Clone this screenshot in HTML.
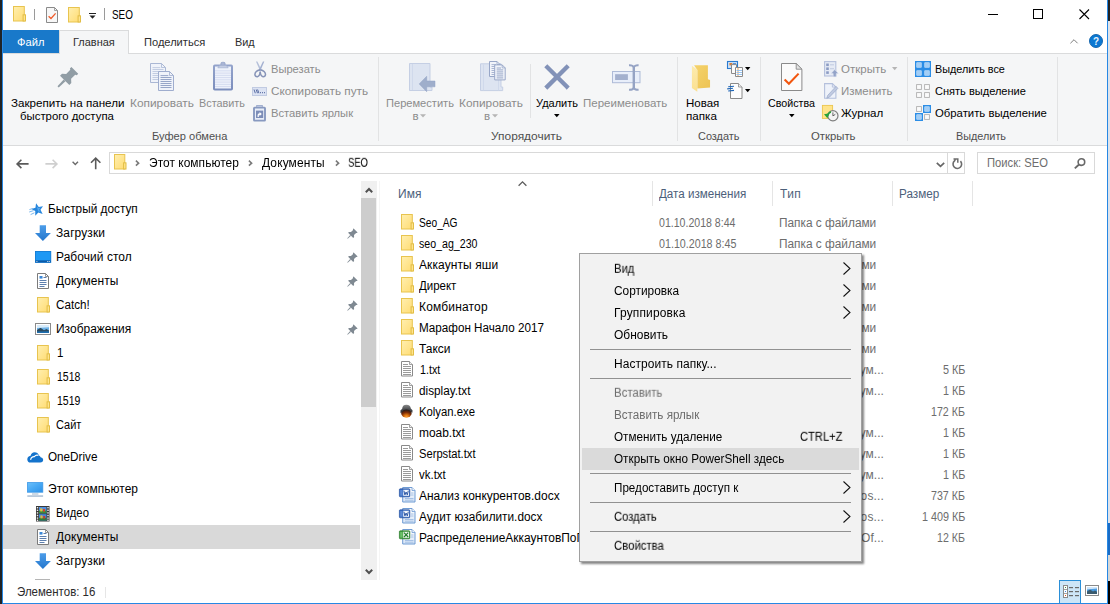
<!DOCTYPE html>
<html lang="ru"><head><meta charset="utf-8"><title>SEO</title>
<style>
html,body{margin:0;padding:0;background:#fff;overflow:hidden}
body{width:1110px;height:604px;position:relative;font-family:"Liberation Sans",sans-serif;font-size:12px;line-height:16px;color:#000}
.a{position:absolute}
.t{position:absolute;white-space:nowrap;font-size:11.5px;line-height:16px;height:16px;transform-origin:0 12px}
.z{z-index:20}
span.z,span.g{will-change:transform}
svg{position:absolute;overflow:visible}
.vs{position:absolute;width:1px;background:#e2e3e4}
</style></head><body>
<!-- outer desktop strips -->
<div class="a" style="left:0;top:0;width:2px;height:604px;background:#1f2326"></div>
<div class="a" style="left:1108px;top:0;width:2px;height:604px;background:#dfe3ea"></div>
<div class="a" style="left:1108px;top:0;width:2px;height:21px;background:#1f2326"></div>
<div class="a" style="left:1108px;top:523px;width:2px;height:32px;background:#1a6cc4"></div>
<div class="a" style="left:1108px;top:555px;width:2px;height:26px;background:#d6d6d6"></div>
<div class="a" style="left:1108px;top:581px;width:2px;height:23px;background:#000"></div>
<!-- window border -->
<div class="a" style="left:2px;top:0;width:1104px;height:603px;border:1px solid #2788e4;border-top:0;background:#fff"></div>
<!-- tabs -->
<div class="a" style="left:3px;top:30px;width:56px;height:23px;background:#1979ca"></div>
<div class="a" style="left:3px;top:53px;width:1104px;height:1px;background:#dadbdc"></div>
<div class="a" style="left:59px;top:30px;width:70px;height:24px;background:#f5f6f7;border:1px solid #dadbdc;border-bottom:0;box-sizing:border-box"></div>
<!-- ribbon -->
<div class="a" style="left:3px;top:54px;width:1104px;height:91px;background:#f5f6f7"></div>
<div class="a" style="left:3px;top:145px;width:1104px;height:1px;background:#dadbdc"></div>
<div class="vs" style="left:378px;top:57px;height:84px"></div>
<div class="vs" style="left:530px;top:64px;height:54px"></div>
<div class="vs" style="left:677px;top:57px;height:84px"></div>
<div class="vs" style="left:760px;top:57px;height:84px"></div>
<div class="vs" style="left:907px;top:57px;height:84px"></div>
<div class="vs" style="left:1057px;top:57px;height:84px"></div>
<!-- address bar -->
<div class="a" style="left:109px;top:152px;width:856px;height:22px;border:1px solid #d9d9d9;box-sizing:border-box"></div>
<div class="a" style="left:947px;top:153px;width:1px;height:20px;background:#d9d9d9"></div>
<div class="a" style="left:977px;top:152px;width:118px;height:22px;border:1px solid #d9d9d9;box-sizing:border-box"></div>
<!-- nav pane -->
<div class="a" style="left:3px;top:525px;width:357px;height:24px;background:#d9d9d9"></div>
<div class="a" style="left:361px;top:181px;width:16px;height:399px;background:#f0f0f0"></div>
<div class="a" style="left:361px;top:198px;width:15px;height:209px;background:#cdcdcd"></div>
<div class="a" style="left:379px;top:181px;width:1px;height:399px;background:#f5f5f5"></div>
<!-- header -->
<div class="a" style="left:652px;top:181px;width:1px;height:25px;background:#e5e5e5"></div>
<div class="a" style="left:772px;top:181px;width:1px;height:25px;background:#e5e5e5"></div>
<div class="a" style="left:892px;top:181px;width:1px;height:25px;background:#e5e5e5"></div>
<div class="a" style="left:972px;top:181px;width:1px;height:25px;background:#e5e5e5"></div>
<!-- status bar -->
<div class="a" style="left:105px;top:587px;width:1px;height:11px;background:#e6e6e6"></div>
<div class="a" style="left:1059px;top:580px;width:22px;height:23px;background:#cde5f7;border:1px solid #2a8fd8;border-bottom:0;box-sizing:border-box"></div>
<!-- context menu -->
<div class="a z" style="left:579px;top:253px;width:283px;height:309px;background:#f2f2f2;border:1px solid #a0a0a0;box-sizing:border-box;box-shadow:2px 2px 2px rgba(0,0,0,.48);z-index:10"></div>
<div class="a z" style="left:582px;top:448px;width:277px;height:22px;background:#dadada;z-index:11"></div>
<div class="a z" style="left:590px;top:349px;width:261px;height:1px;background:#919191;z-index:11"></div>
<div class="a z" style="left:590px;top:378px;width:261px;height:1px;background:#919191;z-index:11"></div>
<div class="a z" style="left:590px;top:473px;width:261px;height:1px;background:#919191;z-index:11"></div>
<div class="a z" style="left:590px;top:502px;width:261px;height:1px;background:#919191;z-index:11"></div>
<div class="a z" style="left:590px;top:531px;width:261px;height:1px;background:#919191;z-index:11"></div>
<svg style="left:13px;top:5.8px" width="13" height="15.5" viewBox="0 0 13 15.5"><defs><linearGradient id="fg" x1="0" y1="0" x2="1" y2="1"><stop offset="0" stop-color="#ffefb0"/><stop offset="1" stop-color="#ffdc73"/></linearGradient></defs><rect x="0.5" y="0.5" width="10.8" height="14.5" fill="url(#fg)" stroke="#e8c44f"/><rect x="10.1" y="8.835" width="2.4" height="6.165" fill="#ffe48c" stroke="#e2bd45"/></svg>
<div class="a" style="left:34px;top:9px;width:1px;height:11px;background:#9a9a9a"></div>
<svg style="left:46px;top:7px" width="12" height="16" viewBox="0 0 12 16"><path d="M0.5 0.5H8.5L11.5 3.5V15.5H0.5Z" fill="#f7f7f7" stroke="#8a8a8a"/><path d="M8.5 0.5V3.5H11.5" fill="none" stroke="#8a8a8a" stroke-width=".8"/><path d="M2.600 9.200L5 11.500L9.600 6.400" fill="none" stroke="#f05a28" stroke-width="1.300"/></svg>
<svg style="left:68px;top:7px" width="13" height="15.5" viewBox="0 0 13 15.5"><defs><linearGradient id="fg" x1="0" y1="0" x2="1" y2="1"><stop offset="0" stop-color="#ffefb0"/><stop offset="1" stop-color="#ffdc73"/></linearGradient></defs><rect x="0.5" y="0.5" width="10.8" height="14.5" fill="url(#fg)" stroke="#e8c44f"/><rect x="10.1" y="8.835" width="2.4" height="6.165" fill="#ffe48c" stroke="#e2bd45"/></svg>
<svg style="left:89px;top:13px" width="7" height="6" viewBox="0 0 7 6"><rect x="0" y="0" width="7" height="1" fill="#222"/><path d="M0.5 2.5H6.5L3.5 5.8Z" fill="#222"/></svg>
<div class="a" style="left:104px;top:8px;width:1px;height:12px;background:#9a9a9a"></div>
<svg style="left:988px;top:14px" width="10" height="1" viewBox="0 0 10 1"><rect width="10" height="1" fill="#000"/></svg>
<svg style="left:1033px;top:9px" width="10" height="10" viewBox="0 0 10 10"><rect x=".5" y=".5" width="9" height="9" fill="none" stroke="#000"/></svg>
<svg style="left:1078.5px;top:9px" width="10.5" height="10.5" viewBox="0 0 10.5 10.5"><path d="M.5 .5L10 10M10 .5L.5 10" stroke="#000" stroke-width="1.1" fill="none"/></svg>
<svg style="left:1070px;top:38.5px" width="8" height="4.6" viewBox="0 0 8 4.6"><path d="M.4 4.300L4 .7L7.600 4.300" fill="none" stroke="#7c7c7c" stroke-width="1"/></svg>
<svg style="left:1089px;top:33.8px" width="14" height="14" viewBox="0 0 14 14"><circle cx="7" cy="7" r="6.500" fill="#0c78d2" stroke="#0a5ea8" stroke-width=".9"/><text x="7" y="10.600" text-anchor="middle" font-family="Liberation Sans, sans-serif" font-weight="bold" font-size="10" fill="#e8f2fc">?</text></svg>
<svg style="left:57px;top:67px" width="21.5" height="21" viewBox="0 0 21.5 21"><g fill="#919da5"><path d="M14.400 0L21.200 6.800L19.800 8.200L18.200 7.700L14.100 11.800L14.300 16L12.300 18L3 8.700L5 6.700L9.200 6.900L13.300 2.800L12.900 1.500Z"/><path d="M6.700 12.500L8.500 14.300L1.700 20.500L.5 19.300Z"/></g></svg>
<svg style="left:150px;top:63px" width="24" height="28" viewBox="0 0 24 28"><path d="M0.5 0.5H11.5L15.5 4.5V19.5H0.5Z" fill="#f0f3fa" stroke="#aab7d4"/><path d="M11.5 0.5V4.5H15.5" fill="none" stroke="#aab7d4" stroke-width=".8"/><rect x="2.5" y="4.1" width="7.8" height="1" fill="#c3cde2"/><rect x="2.5" y="6" width="11" height="1" fill="#c3cde2"/><rect x="2.5" y="8" width="11" height="1" fill="#c3cde2"/><rect x="2.5" y="10" width="11" height="1" fill="#c3cde2"/><rect x="2.5" y="12" width="11" height="1" fill="#c3cde2"/><rect x="2.5" y="14" width="11" height="1" fill="#c3cde2"/><rect x="2.5" y="16" width="11" height="1" fill="#c3cde2"/><path d="M8.5 8.5H19.5L23.5 12.5V27.5H8.5Z" fill="#f0f3fa" stroke="#9fadce"/><path d="M19.5 8.5V12.5H23.5" fill="none" stroke="#9fadce" stroke-width=".8"/><rect x="10.5" y="12.1" width="7.8" height="1" fill="#97a6c8"/><rect x="10.5" y="14" width="11" height="1" fill="#97a6c8"/><rect x="10.5" y="16" width="11" height="1" fill="#97a6c8"/><rect x="10.5" y="18" width="11" height="1" fill="#97a6c8"/><rect x="10.5" y="20" width="11" height="1" fill="#97a6c8"/><rect x="10.5" y="22" width="11" height="1" fill="#97a6c8"/><rect x="10.5" y="24" width="11" height="1" fill="#97a6c8"/></svg>
<svg style="left:213px;top:62px" width="20" height="28.5" viewBox="0 0 20 28.5"><defs><linearGradient id="pb" x1="0" y1="0" x2="0" y2="1"><stop offset="0" stop-color="#93a3cb"/><stop offset="1" stop-color="#7c8ebd"/></linearGradient></defs><rect x="1" y="3.600" width="18" height="24" rx=".8" fill="#eef2fb" stroke="url(#pb)" stroke-width="2"/><rect x="2" y="8.4" width="16" height=".9" fill="#d3daee"/><rect x="2" y="10.65" width="16" height=".9" fill="#d3daee"/><rect x="2" y="12.9" width="16" height=".9" fill="#d3daee"/><rect x="2" y="15.15" width="16" height=".9" fill="#d3daee"/><rect x="2" y="17.4" width="16" height=".9" fill="#d3daee"/><rect x="2" y="19.65" width="16" height=".9" fill="#d3daee"/><rect x="2" y="21.9" width="16" height=".9" fill="#d3daee"/><rect x="2" y="24.15" width="16" height=".9" fill="#d3daee"/><rect x="7.900" y=".3" width="4.200" height="3.400" rx="1.200" fill="#aab6d5" stroke="#8f9fc6" stroke-width=".7"/><path d="M4.800 5.800L6.800 3.300H13.200L15.200 5.800Z" fill="#c4cde3" stroke="#98a7ca" stroke-width=".6"/></svg>
<svg style="left:254px;top:60.5px" width="12.5" height="17" viewBox="0 0 12.5 17"><path d="M2 .6L3.400 .6L7.800 9.600L6.300 10.500Z" fill="#b4bfd9"/><path d="M10.300 .6L8.900 .6L4.600 9.600L6.100 10.500Z" fill="#a3b0d0"/><g fill="none" stroke="#8794b8" stroke-width="1.500" stroke-linejoin="round"><path d="M6 8.800Q1.200 10 .9 13.400Q1 15.800 3.400 15.700Q5.800 15.300 6.200 10.800"/><path d="M6.400 8.800Q11.200 10 11.500 13.400Q11.400 15.800 9 15.700Q6.600 15.300 6.200 10.800"/></g></svg>
<svg style="left:252px;top:87px" width="15" height="9" viewBox="0 0 15 9"><rect x=".5" y=".5" width="14" height="8" fill="#dce3f3" stroke="#c1cbe2"/><path d="M2 2.5L3.3 6.2M4.2 2.5L5.5 6.2M5.6 2.5L6.9 6.2" fill="none" stroke="#4a5f99" stroke-width=".9"/><rect x="8" y="5.2" width="1" height="1" fill="#4a5f99"/><rect x="10" y="5.2" width="1" height="1" fill="#4a5f99"/><rect x="12" y="5.2" width="1" height="1" fill="#4a5f99"/></svg>
<svg style="left:253px;top:104.5px" width="13" height="16.5" viewBox="0 0 13 16.5"><rect x="3.7" y=".5" width="5.6" height="2.6" fill="#c9d2e6" stroke="#93a3c8" stroke-width=".8"/><rect x="1" y="2.6" width="11" height="13" rx=".6" fill="#e9eef8" stroke="#8899c0" stroke-width="1.9"/><rect x="3" y="5.6" width="7.2" height="7.4" fill="#7c8db8"/><path d="M4.6 12V10Q4.6 8.3 6.6 8.3V7L8.8 9L6.6 11V9.8Q5.8 9.8 5.8 10.6V12Z" fill="#fff"/></svg>
<svg style="left:409px;top:63px" width="27" height="29" viewBox="0 0 27 29"><path d="M.5 .5H21V24H23V27.5H.5Z" fill="#dde4f1" stroke="#c5cfe4"/><path d="M3.5 1V27" stroke="#d0d9eb" stroke-width="1"/><path d="M26 18V23.8H17.7V28.7L10.2 20.9L17.7 13.3V18Z" fill="#9faecb" stroke="#93a3c4" stroke-width=".5"/></svg>
<svg style="left:480px;top:60.5px" width="26.5" height="31" viewBox="0 0 26.5 31"><path d="M.5 2.8H21V26H22.7V29.6H.5Z" fill="#dde4f1" stroke="#c5cfe4"/><path d="M3.5 3.3V29.3M18.5 19V29.3" stroke="#d0d9eb" stroke-width="1"/><path d="M9.5 0.5H17L20 3.5V15.5H9.5Z" fill="#f1f4fa" stroke="#98a7c8"/><path d="M17 0.5V3.5H20" fill="none" stroke="#98a7c8" stroke-width=".8"/><rect x="11.5" y="3.1" width="4.3" height="1" fill="#aab6d2"/><rect x="11.5" y="5" width="6.5" height="1" fill="#aab6d2"/><rect x="11.5" y="7" width="6.5" height="1" fill="#aab6d2"/><rect x="11.5" y="9" width="6.5" height="1" fill="#aab6d2"/><rect x="11.5" y="11" width="6.5" height="1" fill="#aab6d2"/><rect x="11.5" y="13" width="6.5" height="1" fill="#aab6d2"/><path d="M14.7 3.9H22.2L25.2 6.9V18.9H14.7Z" fill="#f1f4fa" stroke="#98a7c8"/><path d="M22.2 3.9V6.9H25.2" fill="none" stroke="#98a7c8" stroke-width=".8"/><rect x="16.7" y="6.5" width="4.3" height="1" fill="#99a8c8"/><rect x="16.7" y="8.4" width="6.5" height="1" fill="#99a8c8"/><rect x="16.7" y="10.4" width="6.5" height="1" fill="#99a8c8"/><rect x="16.7" y="12.4" width="6.5" height="1" fill="#99a8c8"/><rect x="16.7" y="14.4" width="6.5" height="1" fill="#99a8c8"/><rect x="16.7" y="16.4" width="6.5" height="1" fill="#99a8c8"/></svg>
<svg style="left:544px;top:64px" width="26" height="26" viewBox="0 0 26 26"><path d="M3.3 3.3L22.7 22.7M22.7 3.3L3.3 22.7" stroke="#8292b8" stroke-width="4.3" fill="none" stroke-linecap="square" transform="translate(0,-.1)"/></svg>
<svg style="left:611px;top:63.5px" width="30" height="27" viewBox="0 0 30 27"><rect x="1.5" y="7.5" width="27.5" height="11.2" fill="#e8eefa" stroke="#aebbd8"/><rect x="4.1" y="10.2" width="12.8" height="5.8" fill="#a3b0ce"/><path d="M18 1.2Q21.8 1 22.8 3.2Q23.800 1 27.600 1.200M18 25.800Q21.800 26 22.800 23.800Q23.800 26 27.600 25.800" fill="none" stroke="#95a3c4" stroke-width="2"/><rect x="21.6" y="2.5" width="2.4" height="22" fill="#95a3c4"/></svg>
<svg style="left:420.3px;top:113.6px" width="6" height="4" viewBox="0 0 6 4"><path d="M0 .3H6L3 3.6Z" fill="#b5b5b5"/></svg>
<svg style="left:491.8px;top:113.6px" width="6" height="4" viewBox="0 0 6 4"><path d="M0 .3H6L3 3.6Z" fill="#b5b5b5"/></svg>
<svg style="left:553.8px;top:114px" width="5.6" height="3.4" viewBox="0 0 5.6 3.4"><path d="M0 0H5.6L2.8 3.2Z" fill="#000"/></svg>
<svg style="left:788.8px;top:114px" width="5.6" height="3.4" viewBox="0 0 5.6 3.4"><path d="M0 0H5.6L2.8 3.2Z" fill="#000"/></svg>
<svg style="left:744.8px;top:66.8px" width="5.4" height="3.4" viewBox="0 0 5.4 3.4"><path d="M0 0H5.4L2.7 3.2Z" fill="#000"/></svg>
<svg style="left:744.8px;top:89px" width="5.4" height="3.4" viewBox="0 0 5.4 3.4"><path d="M0 0H5.4L2.7 3.2Z" fill="#000"/></svg>
<svg style="left:892px;top:67.3px" width="5.4" height="3.4" viewBox="0 0 5.4 3.4"><path d="M0 0H5.4L2.7 3.2Z" fill="#b5b5b5"/></svg>
<svg style="left:691px;top:64px" width="20" height="28" viewBox="0 0 20 28"><defs><linearGradient id="nf" x1="0" y1="0" x2="1" y2="1"><stop offset="0" stop-color="#f5d36c"/><stop offset="1" stop-color="#edc353"/></linearGradient><linearGradient id="nf2" x1="0" y1="0" x2="0" y2="1"><stop offset="0" stop-color="#fdebad"/><stop offset="1" stop-color="#fbe090"/></linearGradient></defs><path d="M3.05 1.2H16.9V15.2L19.05 16V23.6L6.3 24.6V6Z" fill="url(#nf)"/><path d="M.9 1.7L6.3 5.8V27.7L.9 23.9Z" fill="url(#nf2)"/></svg>
<svg style="left:727px;top:61px" width="17" height="16" viewBox="0 0 17 16"><rect x=".5" y=".5" width="10" height="7" fill="#cfe3f8" stroke="#2a7bd0" stroke-width="1.1"/><rect x="2.4" y="2" width="3" height="2.4" fill="#d9803a"/><rect x="6" y="2.2" width="3" height="1" fill="#3b7fd0"/><path d="M4.5 3.6H9.5V12.5H4.5Z" fill="#fbfbfb" stroke="#8a8a8a"/><path d="M8.5 6.500H15.500V15.500H8.500Z" fill="#fff" stroke="#8a8a8a"/><path d="M11 7V15" stroke="#e6a15a" stroke-width="1"/><path d="M9.500 9.500H15M9.500 11.500H15M9.500 13.500H15" stroke="#8fc0f0" stroke-width=".9"/></svg>
<svg style="left:727px;top:83px" width="16" height="16" viewBox="0 0 16 16"><path d="M3.5 .5H11.500L15 4V15.500H3.500Z" fill="#fdfdfd" stroke="#8a8a8a"/><path d="M11.500 .5V4H15" fill="#eee" stroke="#8a8a8a" stroke-width=".8"/><path d="M1.200 3.800L7 3.200M.2 5.900L6 5.300M1.200 8L7 7.400" stroke="#1e66b8" stroke-width="1.1"/></svg>
<svg style="left:781px;top:63px" width="21.5" height="28" viewBox="0 0 21.5 28"><path d="M.5 .5H15.200L20.900 6.200V27.500H.500Z" fill="#fbfbfb" stroke="#8a8a8a"/><path d="M15.200 .5V6.200H20.900Z" fill="#e4e4e4" stroke="#8a8a8a" stroke-width=".9"/><path d="M3.600 16.600L7.900 20.800L17.600 10.600" fill="none" stroke="#f2560f" stroke-width="2.100"/></svg>
<svg style="left:824px;top:61px" width="15" height="16" viewBox="0 0 15 16"><rect x=".6" y=".6" width="11.200" height="14.400" fill="#e6ebf5" stroke="#b4c0dc" stroke-width="1.100"/><rect x="2.200" y="2.500" width="2.600" height="2.600" fill="#8c9cc4"/><rect x="2.200" y="6.400" width="2.600" height="2.600" fill="#8c9cc4"/><rect x="2.200" y="10.300" width="2.600" height="2.600" fill="#8c9cc4"/><rect x="6" y="3.200" width="4" height="1.200" fill="#c5cfe4"/><rect x="6" y="7.100" width="4" height="1.200" fill="#c5cfe4"/><path d="M10.700 8.600L14.400 12.600H12.200V15.800H9.200V12.600H7Z" fill="#93a3c8" stroke="#e6ebf5" stroke-width=".5"/></svg>
<svg style="left:824px;top:83px" width="14.5" height="16.5" viewBox="0 0 14.5 16.5"><path d="M.6 .6H8.400L11.900 4.100V15.300H.600Z" fill="#eef2fa" stroke="#b4c0dc" stroke-width="1.100"/><path d="M8.400 .6V4.100H11.900" fill="none" stroke="#b4c0dc" stroke-width=".9"/><path d="M12 3.400L13.900 5.300L5.400 14.200L2.800 15.200L3.700 12.400Z" fill="#c0cae1" stroke="#9aa9c9" stroke-width=".7"/></svg>
<svg style="left:822px;top:105px" width="17" height="17" viewBox="0 0 17 17"><rect x=".4" y=".4" width="10.200" height="13" fill="#ffe48a" stroke="#ecc64e" stroke-width=".9"/><circle cx="10.900" cy="10.700" r="5.100" fill="#f4f4f4" stroke="#7d7d7d" stroke-width="1.200"/><path d="M10.900 7.400V10.900L13.300 9.400" fill="none" stroke="#555" stroke-width=".9"/><path d="M2 9.200L7.600 8.200L5.400 13.200Z" fill="#2aa23a"/><path d="M5.600 10.600Q6.400 7.600 9 7" fill="none" stroke="#2aa23a" stroke-width="1.500"/></svg>
<svg style="left:915px;top:61px" width="16" height="16" viewBox="0 0 16 16"><rect x="0.75" y="0.75" width="6.500" height="6.500" fill="#fff" stroke="#2b8de6" stroke-width="1.500"/><rect x="2" y="2" width="4" height="4" fill="#a3cef6"/><rect x="8.75" y="0.75" width="6.500" height="6.500" fill="#fff" stroke="#2b8de6" stroke-width="1.500"/><rect x="10" y="2" width="4" height="4" fill="#a3cef6"/><rect x="0.75" y="8.75" width="6.500" height="6.500" fill="#fff" stroke="#2b8de6" stroke-width="1.500"/><rect x="2" y="10" width="4" height="4" fill="#a3cef6"/><rect x="8.75" y="8.75" width="6.500" height="6.500" fill="#fff" stroke="#2b8de6" stroke-width="1.500"/><rect x="10" y="10" width="4" height="4" fill="#a3cef6"/></svg>
<svg style="left:915px;top:83px" width="16" height="16" viewBox="0 0 16 16"><rect x="1.6" y="1.6" width="4.800" height="4.800" fill="#fbfbfb" stroke="#b0b0b0" stroke-width=".9"/><rect x="9.6" y="1.6" width="4.800" height="4.800" fill="#fbfbfb" stroke="#b0b0b0" stroke-width=".9"/><rect x="1.6" y="9.6" width="4.800" height="4.800" fill="#fbfbfb" stroke="#b0b0b0" stroke-width=".9"/><rect x="9.6" y="9.6" width="4.800" height="4.800" fill="#fbfbfb" stroke="#b0b0b0" stroke-width=".9"/></svg>
<svg style="left:915px;top:105px" width="16" height="16" viewBox="0 0 16 16"><rect x="1.6" y="1.6" width="4.800" height="4.800" fill="#fbfbfb" stroke="#b0b0b0" stroke-width=".9"/><rect x="8.75" y="0.75" width="6.500" height="6.500" fill="#fff" stroke="#2b8de6" stroke-width="1.500"/><rect x="10" y="2" width="4" height="4" fill="#a3cef6"/><rect x="0.75" y="8.75" width="6.500" height="6.500" fill="#fff" stroke="#2b8de6" stroke-width="1.500"/><rect x="2" y="10" width="4" height="4" fill="#a3cef6"/><rect x="9.6" y="9.6" width="4.800" height="4.800" fill="#fbfbfb" stroke="#b0b0b0" stroke-width=".9"/></svg>
<svg style="left:15.5px;top:159px" width="13" height="10" viewBox="0 0 13 10"><path d="M5.4 .7L1.1 4.9L5.4 9.1M1.2 4.9H12.6" fill="none" stroke="#5a5a5a" stroke-width="1.6"/></svg>
<svg style="left:45px;top:159px" width="13" height="10" viewBox="0 0 13 10"><path d="M7.6 .7L11.9 4.9L7.6 9.1M11.8 4.9H.4" fill="none" stroke="#cfcfcf" stroke-width="1.6"/></svg>
<svg style="left:72px;top:160.8px" width="7" height="4.5" viewBox="0 0 7 4.5"><path d="M.6 .7L3.300 3.400L6 .7" fill="none" stroke="#6a6a6a" stroke-width="1.4"/></svg>
<svg style="left:90px;top:157px" width="11.5" height="12.5" viewBox="0 0 11.5 12.5"><path d="M1 5.700L5.700 1.100L10.400 5.700M5.700 1.300V12.200" fill="none" stroke="#5a5a5a" stroke-width="1.6"/></svg>
<svg style="left:114px;top:154px" width="12.5" height="15.5" viewBox="0 0 12.5 15.5"><defs><linearGradient id="fg" x1="0" y1="0" x2="1" y2="1"><stop offset="0" stop-color="#ffefb0"/><stop offset="1" stop-color="#ffdc73"/></linearGradient></defs><rect x="0.5" y="0.5" width="10.3" height="14.5" fill="url(#fg)" stroke="#e8c44f"/><rect x="9.6" y="8.835" width="2.4" height="6.165" fill="#ffe48c" stroke="#e2bd45"/></svg>
<svg style="left:135px;top:160px" width="5" height="6.5" viewBox="0 0 5 6.5"><path d="M.9 .7L3.600 3.200L.9 5.700" fill="none" stroke="#7a7a7a" stroke-width="1.6"/></svg>
<svg style="left:247.5px;top:160px" width="5" height="6.5" viewBox="0 0 5 6.5"><path d="M.9 .7L3.600 3.200L.9 5.700" fill="none" stroke="#7a7a7a" stroke-width="1.6"/></svg>
<svg style="left:334.5px;top:160px" width="5" height="6.5" viewBox="0 0 5 6.5"><path d="M.9 .7L3.600 3.200L.9 5.700" fill="none" stroke="#7a7a7a" stroke-width="1.6"/></svg>
<svg style="left:935.5px;top:161.5px" width="9" height="5.5" viewBox="0 0 9 5.5"><path d="M.8 .8L4.500 4.400L8.200 .8" fill="none" stroke="#666" stroke-width="1.700"/></svg>
<svg style="left:951.5px;top:157.8px" width="11" height="11.5" viewBox="0 0 11 11.5"><path d="M8.440 3.160A4.300 4.300 0 1 1 2.500 2.900L3.400 1.200" fill="none" stroke="#6c6c6c" stroke-width="1.600"/><path d="M1.500 .9H5.800V4.800" fill="none" stroke="#6c6c6c" stroke-width="1.500"/></svg>
<svg style="left:1074.2px;top:158.3px" width="11.5" height="11" viewBox="0 0 11.5 11"><circle cx="7.400" cy="4.100" r="3.300" fill="none" stroke="#686868" stroke-width="1.600"/><path d="M5 6.500L.8 10.400" stroke="#686868" stroke-width="1.900"/></svg>
<svg style="left:29px;top:202.5px" width="14" height="12.5" viewBox="0 0 14 12.5"><g transform="rotate(-14 8.600 6.400)"><path d="M8.600 0L10.300 4.300L14.600 4.600L11.300 7.400L12.400 12L8.600 9.500L4.800 12L5.900 7.400L2.600 4.600L6.900 4.300Z" fill="#2585dc"/><path d="M8.600 2.600L9.500 5.200L12 5.400L10 7L10.700 9.600L8.600 8.200Z" fill="#58a8ee"/></g><path d="M.4 6.600L4 5.400M.2 9L4.600 7.600M1.600 11.600L5.400 9.800" stroke="#7db9ee" stroke-width="1"/></svg>
<svg style="left:35px;top:225px" width="16" height="16" viewBox="0 0 16 16"><defs><linearGradient id="dlg" x1="0" y1="0" x2="0" y2="1"><stop offset="0" stop-color="#4d9de9"/><stop offset="1" stop-color="#2477cd"/></linearGradient></defs><path d="M4.700 .2H11V7.900H15.900L7.900 15.900L0 7.900H4.700Z" fill="url(#dlg)"/></svg>
<svg style="left:35px;top:251px" width="16.5" height="12" viewBox="0 0 16.5 12"><rect x="0" y="0" width="16.200" height="11.900" fill="#1576cc"/><rect x=".7" y=".7" width="14.800" height="8.800" fill="#1e98f4"/><rect x=".7" y="9.500" width="14.800" height="1.700" fill="#0c5aa6"/><rect x="1.400" y="10" width="1" height=".8" fill="#fff"/><rect x="12.200" y="10" width="1" height=".8" fill="#fff"/><rect x="13.800" y="10" width="1" height=".8" fill="#fff"/></svg>
<svg style="left:36.8px;top:273px" width="12" height="16" viewBox="0 0 12 16"><path d="M.5 .5H8.5L11.5 3.5V15.5H.5Z" fill="#fff" stroke="#7b7b7b"/><path d="M8.5 .5V3.5H11.5" fill="none" stroke="#7b7b7b" stroke-width=".8"/><rect x="2.5" y="3" width="3" height="2.6" fill="#3b88d8"/><path d="M6.5 4.5H9.5M2.5 7.5H9.5M2.5 9.5H9.5M2.5 11.5H9.5M2.5 13.5H7.5" stroke="#5d7fae" stroke-width="1"/></svg>
<svg style="left:37px;top:297px" width="13" height="15.5" viewBox="0 0 13 15.5"><defs><linearGradient id="fg" x1="0" y1="0" x2="1" y2="1"><stop offset="0" stop-color="#ffefb0"/><stop offset="1" stop-color="#ffdc73"/></linearGradient></defs><rect x="0.5" y="0.5" width="10.8" height="14.5" fill="url(#fg)" stroke="#e8c44f"/><rect x="10.1" y="8.835" width="2.4" height="6.165" fill="#ffe48c" stroke="#e2bd45"/></svg>
<svg style="left:35px;top:323px" width="16" height="12" viewBox="0 0 16 12"><rect x=".5" y=".5" width="15" height="11" fill="#fff" stroke="#8a8a8a"/><rect x="2" y="2" width="12" height="8" fill="#6db2e8"/><path d="M2 7L5.5 4.8L9 7.2L11.5 6L14 7.4V10H2Z" fill="#2c4a5e"/><path d="M2 8.6L14 8.2V10H2Z" fill="#1f6fb0"/><path d="M2 2H14V4.2L2 5Z" fill="#d9ecfa"/></svg>
<svg style="left:37px;top:345px" width="13" height="15.5" viewBox="0 0 13 15.5"><defs><linearGradient id="fg" x1="0" y1="0" x2="1" y2="1"><stop offset="0" stop-color="#ffefb0"/><stop offset="1" stop-color="#ffdc73"/></linearGradient></defs><rect x="0.5" y="0.5" width="10.8" height="14.5" fill="url(#fg)" stroke="#e8c44f"/><rect x="10.1" y="8.835" width="2.4" height="6.165" fill="#ffe48c" stroke="#e2bd45"/></svg>
<svg style="left:37px;top:369px" width="13" height="15.5" viewBox="0 0 13 15.5"><defs><linearGradient id="fg" x1="0" y1="0" x2="1" y2="1"><stop offset="0" stop-color="#ffefb0"/><stop offset="1" stop-color="#ffdc73"/></linearGradient></defs><rect x="0.5" y="0.5" width="10.8" height="14.5" fill="url(#fg)" stroke="#e8c44f"/><rect x="10.1" y="8.835" width="2.4" height="6.165" fill="#ffe48c" stroke="#e2bd45"/></svg>
<svg style="left:37px;top:393px" width="13" height="15.5" viewBox="0 0 13 15.5"><defs><linearGradient id="fg" x1="0" y1="0" x2="1" y2="1"><stop offset="0" stop-color="#ffefb0"/><stop offset="1" stop-color="#ffdc73"/></linearGradient></defs><rect x="0.5" y="0.5" width="10.8" height="14.5" fill="url(#fg)" stroke="#e8c44f"/><rect x="10.1" y="8.835" width="2.4" height="6.165" fill="#ffe48c" stroke="#e2bd45"/></svg>
<svg style="left:37px;top:417px" width="13" height="15.5" viewBox="0 0 13 15.5"><defs><linearGradient id="fg" x1="0" y1="0" x2="1" y2="1"><stop offset="0" stop-color="#ffefb0"/><stop offset="1" stop-color="#ffdc73"/></linearGradient></defs><rect x="0.5" y="0.5" width="10.8" height="14.5" fill="url(#fg)" stroke="#e8c44f"/><rect x="10.1" y="8.835" width="2.4" height="6.165" fill="#ffe48c" stroke="#e2bd45"/></svg>
<svg style="left:27px;top:451.5px" width="16.5" height="10.8" viewBox="0 0 16.5 10.8"><path d="M3.400 10.600H13.200Q16.200 10.300 16.200 7.800Q16 5.600 13.600 5.300Q13.300 3.900 12 3.500Q10.800 .3 7.600 .3Q4.400 .5 3.600 3.800Q.3 4.300 .3 7.400Q.5 10.400 3.400 10.600Z" fill="#1473cc"/><path d="M3.600 7.800Q4.200 4.400 7.400 4.600Q8.800 2.600 11.400 3.400" stroke="#fff" stroke-width="1.100" fill="none"/></svg>
<svg style="left:27px;top:482px" width="16.5" height="15" viewBox="0 0 16.5 15"><defs><linearGradient id="pcg" x1="0" y1="0" x2="1" y2="1"><stop offset="0" stop-color="#6cc0fa"/><stop offset=".5" stop-color="#46a8f4"/><stop offset="1" stop-color="#2e90e6"/></linearGradient></defs><rect x=".5" y=".6" width="15.300" height="9.600" fill="url(#pcg)" stroke="#3a97e6" stroke-width=".8"/><rect x="5" y="11.500" width="6.400" height="1" fill="#9bb3cc"/><rect x=".3" y="13.500" width="15.800" height="1.100" fill="#8aa6c4"/></svg>
<svg style="left:36px;top:505.5px" width="13.5" height="15.5" viewBox="0 0 13.5 15.5"><rect x="0" y="0" width="13.5" height="15.5" fill="#3a3a3a"/><rect x="3" y="1" width="7.500" height="6.300" fill="#4f8fe0"/><rect x="3" y="4.600" width="7.500" height="2.700" fill="#3b8a3a"/><rect x="4.200" y="2.400" width="2.200" height="3" fill="#e8c43a"/><rect x="7" y="3" width="2" height="2.600" fill="#d6452a"/><rect x="3" y="8.200" width="7.500" height="6.300" fill="#3f86dc"/><rect x="3" y="11.800" width="7.500" height="2.700" fill="#2f7a3a"/><rect x="4.400" y="9.400" width="2.200" height="3" fill="#e0b83a"/><rect x="7.200" y="10" width="2" height="2.600" fill="#c8402a"/><rect x=".8" y="1" width="1.4" height="1.4" fill="#eee"/><rect x="11.3" y="1" width="1.4" height="1.4" fill="#eee"/><rect x=".8" y="3.6" width="1.4" height="1.4" fill="#eee"/><rect x="11.3" y="3.6" width="1.4" height="1.4" fill="#eee"/><rect x=".8" y="6.2" width="1.4" height="1.4" fill="#eee"/><rect x="11.3" y="6.2" width="1.4" height="1.4" fill="#eee"/><rect x=".8" y="8.8" width="1.4" height="1.4" fill="#eee"/><rect x="11.3" y="8.8" width="1.4" height="1.4" fill="#eee"/><rect x=".8" y="11.4" width="1.4" height="1.4" fill="#eee"/><rect x="11.3" y="11.4" width="1.4" height="1.4" fill="#eee"/><rect x=".8" y="13.6" width="1.4" height="1.4" fill="#eee"/><rect x="11.3" y="13.6" width="1.4" height="1.4" fill="#eee"/></svg>
<svg style="left:36.8px;top:529px" width="12" height="16" viewBox="0 0 12 16"><path d="M.5 .5H8.5L11.5 3.5V15.5H.5Z" fill="#fff" stroke="#7b7b7b"/><path d="M8.5 .5V3.5H11.5" fill="none" stroke="#7b7b7b" stroke-width=".8"/><rect x="2.5" y="3" width="3" height="2.6" fill="#3b88d8"/><path d="M6.5 4.5H9.5M2.5 7.5H9.5M2.5 9.5H9.5M2.5 11.5H9.5M2.5 13.5H7.5" stroke="#5d7fae" stroke-width="1"/></svg>
<svg style="left:35px;top:553px" width="16" height="16" viewBox="0 0 16 16"><defs><linearGradient id="dlg" x1="0" y1="0" x2="0" y2="1"><stop offset="0" stop-color="#4d9de9"/><stop offset="1" stop-color="#2477cd"/></linearGradient></defs><path d="M4.700 .2H11V7.900H15.900L7.900 15.900L0 7.900H4.700Z" fill="url(#dlg)"/></svg>
<div class="a" style="left:35px;top:579px;width:15px;height:1px;background:#b5b5b5"></div>
<svg style="left:346.5px;top:227.5px" width="11" height="11" viewBox="0 0 11 11"><g fill="#7f8992"><path d="M6.6 .4L10.6 4.4L9.9 5.1L9.1 4.9L7 7L7.1 9L6.2 9.9L1.1 4.8L2 3.9L4 4L6.1 1.9L5.9 1.1Z"/><path d="M3.2 7L4 7.8L.7 10.7L.3 10.3Z"/></g></svg>
<svg style="left:346.5px;top:251.5px" width="11" height="11" viewBox="0 0 11 11"><g fill="#7f8992"><path d="M6.6 .4L10.6 4.4L9.9 5.1L9.1 4.9L7 7L7.1 9L6.2 9.9L1.1 4.8L2 3.9L4 4L6.1 1.9L5.9 1.1Z"/><path d="M3.2 7L4 7.8L.7 10.7L.3 10.3Z"/></g></svg>
<svg style="left:346.5px;top:275.5px" width="11" height="11" viewBox="0 0 11 11"><g fill="#7f8992"><path d="M6.6 .4L10.6 4.4L9.9 5.1L9.1 4.9L7 7L7.1 9L6.2 9.9L1.1 4.8L2 3.9L4 4L6.1 1.9L5.9 1.1Z"/><path d="M3.2 7L4 7.8L.7 10.7L.3 10.3Z"/></g></svg>
<svg style="left:346.5px;top:299.5px" width="11" height="11" viewBox="0 0 11 11"><g fill="#7f8992"><path d="M6.6 .4L10.6 4.4L9.9 5.1L9.1 4.9L7 7L7.1 9L6.2 9.9L1.1 4.8L2 3.9L4 4L6.1 1.9L5.9 1.1Z"/><path d="M3.2 7L4 7.8L.7 10.7L.3 10.3Z"/></g></svg>
<svg style="left:346.5px;top:323.5px" width="11" height="11" viewBox="0 0 11 11"><g fill="#7f8992"><path d="M6.6 .4L10.6 4.4L9.9 5.1L9.1 4.9L7 7L7.1 9L6.2 9.9L1.1 4.8L2 3.9L4 4L6.1 1.9L5.9 1.1Z"/><path d="M3.2 7L4 7.8L.7 10.7L.3 10.3Z"/></g></svg>
<svg style="left:364.5px;top:187.2px" width="8" height="6" viewBox="0 0 8 6"><path d="M.8 5.200L4 2L7.200 5.200" fill="none" stroke="#505050" stroke-width="2"/></svg>
<svg style="left:364.5px;top:568.5px" width="8" height="6" viewBox="0 0 8 6"><path d="M.8 .8L4 4L7.200 .8" fill="none" stroke="#505050" stroke-width="2"/></svg>
<svg style="left:518px;top:181px" width="9" height="5" viewBox="0 0 9 5"><path d="M.6 4.700L4.500 .9L8.400 4.700" fill="none" stroke="#5c5c5c" stroke-width="1.300"/></svg>
<svg style="left:401px;top:214px" width="13" height="15.5" viewBox="0 0 13 15.5"><defs><linearGradient id="fg" x1="0" y1="0" x2="1" y2="1"><stop offset="0" stop-color="#ffefb0"/><stop offset="1" stop-color="#ffdc73"/></linearGradient></defs><rect x="0.5" y="0.5" width="10.8" height="14.5" fill="url(#fg)" stroke="#e8c44f"/><rect x="10.1" y="8.835" width="2.4" height="6.165" fill="#ffe48c" stroke="#e2bd45"/></svg>
<svg style="left:401px;top:235px" width="13" height="15.5" viewBox="0 0 13 15.5"><defs><linearGradient id="fg" x1="0" y1="0" x2="1" y2="1"><stop offset="0" stop-color="#ffefb0"/><stop offset="1" stop-color="#ffdc73"/></linearGradient></defs><rect x="0.5" y="0.5" width="10.8" height="14.5" fill="url(#fg)" stroke="#e8c44f"/><rect x="10.1" y="8.835" width="2.4" height="6.165" fill="#ffe48c" stroke="#e2bd45"/></svg>
<svg style="left:401px;top:256px" width="13" height="15.5" viewBox="0 0 13 15.5"><defs><linearGradient id="fg" x1="0" y1="0" x2="1" y2="1"><stop offset="0" stop-color="#ffefb0"/><stop offset="1" stop-color="#ffdc73"/></linearGradient></defs><rect x="0.5" y="0.5" width="10.8" height="14.5" fill="url(#fg)" stroke="#e8c44f"/><rect x="10.1" y="8.835" width="2.4" height="6.165" fill="#ffe48c" stroke="#e2bd45"/></svg>
<svg style="left:401px;top:277px" width="13" height="15.5" viewBox="0 0 13 15.5"><defs><linearGradient id="fg" x1="0" y1="0" x2="1" y2="1"><stop offset="0" stop-color="#ffefb0"/><stop offset="1" stop-color="#ffdc73"/></linearGradient></defs><rect x="0.5" y="0.5" width="10.8" height="14.5" fill="url(#fg)" stroke="#e8c44f"/><rect x="10.1" y="8.835" width="2.4" height="6.165" fill="#ffe48c" stroke="#e2bd45"/></svg>
<svg style="left:401px;top:298px" width="13" height="15.5" viewBox="0 0 13 15.5"><defs><linearGradient id="fg" x1="0" y1="0" x2="1" y2="1"><stop offset="0" stop-color="#ffefb0"/><stop offset="1" stop-color="#ffdc73"/></linearGradient></defs><rect x="0.5" y="0.5" width="10.8" height="14.5" fill="url(#fg)" stroke="#e8c44f"/><rect x="10.1" y="8.835" width="2.4" height="6.165" fill="#ffe48c" stroke="#e2bd45"/></svg>
<svg style="left:401px;top:319px" width="13" height="15.5" viewBox="0 0 13 15.5"><defs><linearGradient id="fg" x1="0" y1="0" x2="1" y2="1"><stop offset="0" stop-color="#ffefb0"/><stop offset="1" stop-color="#ffdc73"/></linearGradient></defs><rect x="0.5" y="0.5" width="10.8" height="14.5" fill="url(#fg)" stroke="#e8c44f"/><rect x="10.1" y="8.835" width="2.4" height="6.165" fill="#ffe48c" stroke="#e2bd45"/></svg>
<svg style="left:401px;top:340px" width="13" height="15.5" viewBox="0 0 13 15.5"><defs><linearGradient id="fg" x1="0" y1="0" x2="1" y2="1"><stop offset="0" stop-color="#ffefb0"/><stop offset="1" stop-color="#ffdc73"/></linearGradient></defs><rect x="0.5" y="0.5" width="10.8" height="14.5" fill="url(#fg)" stroke="#e8c44f"/><rect x="10.1" y="8.835" width="2.4" height="6.165" fill="#ffe48c" stroke="#e2bd45"/></svg>
<svg style="left:401px;top:361.4px" width="12" height="15.5" viewBox="0 0 12 15.5"><path d="M.5 .5H8.500L11.500 3.500V15H.5Z" fill="#fff" stroke="#8a8a8a"/><path d="M8.500 .5V3.500H11.500" fill="#f0f0f0" stroke="#8a8a8a" stroke-width=".8"/><path d="M2 3.500H7M2 5.500H10M2 7.500H10M2 9.500H10M2 11.500H10M2 13.500H10" stroke="#8f8f8f" stroke-width=".9"/></svg>
<svg style="left:401px;top:382.4px" width="12" height="15.5" viewBox="0 0 12 15.5"><path d="M.5 .5H8.500L11.500 3.500V15H.5Z" fill="#fff" stroke="#8a8a8a"/><path d="M8.500 .5V3.500H11.500" fill="#f0f0f0" stroke="#8a8a8a" stroke-width=".8"/><path d="M2 3.500H7M2 5.500H10M2 7.500H10M2 9.500H10M2 11.500H10M2 13.500H10" stroke="#8f8f8f" stroke-width=".9"/></svg>
<svg style="left:400.3px;top:403.8px" width="13" height="14" viewBox="0 0 13 14"><defs><radialGradient id="ko" cx=".5" cy=".92" r=".75"><stop offset="0" stop-color="#ffa23c"/><stop offset=".3" stop-color="#d9720f"/><stop offset=".65" stop-color="#7a2c08"/><stop offset="1" stop-color="#2a1c18"/></radialGradient><linearGradient id="kh" x1="0" y1="0" x2="0" y2="1"><stop offset="0" stop-color="#8a8a8a"/><stop offset=".55" stop-color="#4a4c50"/><stop offset="1" stop-color="#26282c"/></linearGradient></defs><ellipse cx="6.400" cy="9" rx="5.300" ry="4.700" fill="url(#ko)"/><path d="M2.200 4.800Q2.200 .9 6.400 .7Q10.600 .9 10.800 4.600L12.500 6.200L12.400 8.800L10.800 7.600Q9.400 5.400 6.400 5.600Q3.400 5.400 2.200 7.800L.6 9.200L.4 6.600Z" fill="url(#kh)"/></svg>
<svg style="left:401px;top:424.4px" width="12" height="15.5" viewBox="0 0 12 15.5"><path d="M.5 .5H8.500L11.500 3.500V15H.5Z" fill="#fff" stroke="#8a8a8a"/><path d="M8.500 .5V3.500H11.500" fill="#f0f0f0" stroke="#8a8a8a" stroke-width=".8"/><path d="M2 3.500H7M2 5.500H10M2 7.500H10M2 9.500H10M2 11.500H10M2 13.500H10" stroke="#8f8f8f" stroke-width=".9"/></svg>
<svg style="left:401px;top:445.4px" width="12" height="15.5" viewBox="0 0 12 15.5"><path d="M.5 .5H8.500L11.500 3.500V15H.5Z" fill="#fff" stroke="#8a8a8a"/><path d="M8.500 .5V3.500H11.500" fill="#f0f0f0" stroke="#8a8a8a" stroke-width=".8"/><path d="M2 3.500H7M2 5.500H10M2 7.500H10M2 9.500H10M2 11.500H10M2 13.500H10" stroke="#8f8f8f" stroke-width=".9"/></svg>
<svg style="left:401px;top:466.4px" width="12" height="15.5" viewBox="0 0 12 15.5"><path d="M.5 .5H8.500L11.500 3.500V15H.5Z" fill="#fff" stroke="#8a8a8a"/><path d="M8.500 .5V3.500H11.500" fill="#f0f0f0" stroke="#8a8a8a" stroke-width=".8"/><path d="M2 3.500H7M2 5.500H10M2 7.500H10M2 9.500H10M2 11.500H10M2 13.500H10" stroke="#8f8f8f" stroke-width=".9"/></svg>
<svg style="left:399px;top:486.9px" width="16.5" height="15.5" viewBox="0 0 16.5 15.5"><defs><linearGradient id="wg" x1="0" y1="0" x2="0" y2="1"><stop offset="0" stop-color="#ffffff"/><stop offset="1" stop-color="#d6e4f6"/></linearGradient></defs><path d="M3.700 .5H13L16 3.500V15H3.700Z" fill="url(#wg)" stroke="#6f9bd3"/><path d="M13 .5V3.500H16" fill="#eef4fb" stroke="#6f9bd3" stroke-width=".8"/><path d="M12 6H14.500M12 8H14.500M6 11.500H14.500M6 13.200H14.500" stroke="#9dbbe2" stroke-width=".9"/><rect x=".4" y="1.800" width="10.400" height="8" rx=".8" fill="#3a6dc0" stroke="#2450a0" stroke-width=".7"/><rect x="4.200" y="2.800" width="5.800" height="6" fill="#f4f8fd"/><path d="M4.900 3.700L5.900 7.900L7.100 5L8.300 7.900L9.300 3.700" fill="none" stroke="#2450a0" stroke-width=".95"/><rect x="1.200" y="3" width="2.400" height="5.600" fill="#5e8bd6"/></svg>
<svg style="left:399px;top:507.9px" width="16.5" height="15.5" viewBox="0 0 16.5 15.5"><defs><linearGradient id="wg" x1="0" y1="0" x2="0" y2="1"><stop offset="0" stop-color="#ffffff"/><stop offset="1" stop-color="#d6e4f6"/></linearGradient></defs><path d="M3.700 .5H13L16 3.500V15H3.700Z" fill="url(#wg)" stroke="#6f9bd3"/><path d="M13 .5V3.500H16" fill="#eef4fb" stroke="#6f9bd3" stroke-width=".8"/><path d="M12 6H14.500M12 8H14.500M6 11.500H14.500M6 13.200H14.500" stroke="#9dbbe2" stroke-width=".9"/><rect x=".4" y="1.800" width="10.400" height="8" rx=".8" fill="#3a6dc0" stroke="#2450a0" stroke-width=".7"/><rect x="4.200" y="2.800" width="5.800" height="6" fill="#f4f8fd"/><path d="M4.900 3.700L5.900 7.900L7.100 5L8.300 7.900L9.300 3.700" fill="none" stroke="#2450a0" stroke-width=".95"/><rect x="1.200" y="3" width="2.400" height="5.600" fill="#5e8bd6"/></svg>
<svg style="left:399px;top:528.9px" width="16.5" height="15.5" viewBox="0 0 16.5 15.5"><defs><linearGradient id="xg" x1="0" y1="0" x2="0" y2="1"><stop offset="0" stop-color="#ffffff"/><stop offset="1" stop-color="#d6e4f6"/></linearGradient></defs><path d="M3.700 .5H13L16 3.500V15H3.700Z" fill="url(#xg)" stroke="#6f9bd3"/><path d="M13 .5V3.500H16" fill="#eef4fb" stroke="#6f9bd3" stroke-width=".8"/><path d="M12 6H14.500M12 8H14.500M6 11.500H14.500M6 13.200H14.500" stroke="#9dbbe2" stroke-width=".9"/><rect x=".4" y="1.800" width="10.400" height="8" rx=".8" fill="#3f9a3f" stroke="#2a7a2a" stroke-width=".7"/><rect x="4.200" y="2.800" width="5.800" height="6" fill="#f2f8ef"/><path d="M5 3.600L9.200 8M9.200 3.600L5 8" fill="none" stroke="#1f7a2a" stroke-width="1.200"/><rect x="1.200" y="3" width="2.400" height="5.600" fill="#6cc06a"/></svg>
<svg style="left:1063px;top:585px" width="17" height="13" viewBox="0 0 17 13"><rect x=".5" y=".5" width="4" height="12" fill="#fff" stroke="#8a8a8a"/><path d="M.5 4.500H4.500M.5 8.500H4.500" stroke="#8a8a8a" stroke-width=".8"/><rect x="2" y="2" width="1" height="1" fill="#3a8a4a"/><rect x="2" y="6" width="1" height="1" fill="#3b88e8"/><rect x="2" y="10" width="1" height="1" fill="#e8541a"/><rect x="6" y="2" width="4" height="1.200" fill="#6a6a6a"/><rect x="12" y="2" width="4" height="1.200" fill="#6a6a6a"/><rect x="6" y="6" width="4" height="1.200" fill="#6a6a6a"/><rect x="12" y="6" width="4" height="1.200" fill="#6a6a6a"/><rect x="6" y="10" width="4" height="1.200" fill="#6a6a6a"/><rect x="12" y="10" width="4" height="1.200" fill="#6a6a6a"/></svg>
<svg style="left:1085px;top:585px" width="14" height="11" viewBox="0 0 14 11"><rect x=".5" y=".5" width="13" height="10" fill="#fff" stroke="#8a8a8a"/><rect x="2" y="2" width="10" height="7" fill="#4b9be0"/><path d="M2 6.5L5 4.5L8 6.6L10 5.6L12 6.8V9H2Z" fill="#3a5a6e"/><path d="M2 2H12V3.6L2 4.4Z" fill="#cfe6fa"/></svg>
<svg style="left:843px;top:262px;z-index:20" width="8" height="13" viewBox="0 0 8 13"><path d="M.5 .5L7 6.500L.5 12.500" fill="none" stroke="#111" stroke-width="1.050"/></svg>
<svg style="left:843px;top:284px;z-index:20" width="8" height="13" viewBox="0 0 8 13"><path d="M.5 .5L7 6.500L.5 12.500" fill="none" stroke="#111" stroke-width="1.050"/></svg>
<svg style="left:843px;top:306px;z-index:20" width="8" height="13" viewBox="0 0 8 13"><path d="M.5 .5L7 6.500L.5 12.500" fill="none" stroke="#111" stroke-width="1.050"/></svg>
<svg style="left:843px;top:481px;z-index:20" width="8" height="13" viewBox="0 0 8 13"><path d="M.5 .5L7 6.500L.5 12.500" fill="none" stroke="#111" stroke-width="1.050"/></svg>
<svg style="left:843px;top:510px;z-index:20" width="8" height="13" viewBox="0 0 8 13"><path d="M.5 .5L7 6.500L.5 12.500" fill="none" stroke="#111" stroke-width="1.050"/></svg>
<span class="t" style="left:112.00px;top:7.0px;color:#000;transform:scale(0.8627,1.080)">SEO</span>
<span class="t" style="left:16.80px;top:34.0px;color:#fff;transform:scaleX(0.9687)">Файл</span>
<span class="t" style="left:73.00px;top:34.0px;color:#2e2e2e;transform:scaleX(0.9531)">Главная</span>
<span class="t" style="left:144.00px;top:34.0px;color:#2e2e2e;transform:scaleX(0.9640)">Поделиться</span>
<span class="t" style="left:235.00px;top:34.0px;color:#2e2e2e;transform:scaleX(0.9481)">Вид</span>
<span class="t" style="left:11.00px;top:95.0px;color:#000;transform:scaleX(1.0097)">Закрепить на панели</span>
<span class="t" style="left:20.00px;top:108.0px;color:#000;transform:scaleX(0.9903)">быстрого доступа</span>
<span class="t" style="left:130.00px;top:95.0px;color:#8c8c8c;transform:scaleX(1.0335)">Копировать</span>
<span class="t" style="left:199.00px;top:95.0px;color:#8c8c8c;transform:scaleX(0.9435)">Вставить</span>
<span class="t" style="left:271.00px;top:61.0px;color:#8c8c8c;transform:scaleX(0.9676)">Вырезать</span>
<span class="t" style="left:271.00px;top:83.0px;color:#8c8c8c;transform:scaleX(1.0197)">Скопировать путь</span>
<span class="t" style="left:271.00px;top:105.0px;color:#8c8c8c;transform:scaleX(0.9748)">Вставить ярлык</span>
<span class="t" style="left:152.00px;top:128.0px;color:#4f4f4f;transform:scaleX(0.9651)">Буфер обмена</span>
<span class="t" style="left:386.00px;top:95.0px;color:#8c8c8c;transform:scaleX(0.9650)">Переместить</span>
<span class="t" style="left:412.50px;top:108.0px;color:#8c8c8c">в</span>
<span class="t" style="left:459.00px;top:95.0px;color:#8c8c8c;transform:scaleX(1.0335)">Копировать</span>
<span class="t" style="left:484.00px;top:108.0px;color:#8c8c8c">в</span>
<span class="t" style="left:536.00px;top:95.0px;color:#000;transform:scaleX(0.9564)">Удалить</span>
<span class="t" style="left:583.00px;top:95.0px;color:#8c8c8c">Переименовать</span>
<span class="t" style="left:491.00px;top:128.0px;color:#4f4f4f;transform:scaleX(1.0374)">Упорядочить</span>
<span class="t" style="left:686.00px;top:95.0px;color:#000">Новая</span>
<span class="t" style="left:686.00px;top:108.0px;color:#000;transform:scaleX(1.0117)">папка</span>
<span class="t" style="left:697.50px;top:128.0px;color:#4f4f4f;transform:scaleX(0.9494)">Создать</span>
<span class="t" style="left:767.50px;top:95.0px;color:#000;transform:scaleX(0.9295)">Свойства</span>
<span class="t" style="left:841.00px;top:61.0px;color:#8c8c8c">Открыть</span>
<span class="t" style="left:841.00px;top:83.0px;color:#8c8c8c;transform:scaleX(0.9926)">Изменить</span>
<span class="t" style="left:841.00px;top:105.0px;color:#000;transform:scaleX(1.0060)">Журнал</span>
<span class="t" style="left:811.00px;top:128.0px;color:#4f4f4f;transform:scaleX(0.9851)">Открыть</span>
<span class="t" style="left:934.50px;top:61.0px;color:#000;transform:scaleX(0.9395)">Выделить все</span>
<span class="t" style="left:934.50px;top:83.0px;color:#000;transform:scaleX(0.9595)">Снять выделение</span>
<span class="t" style="left:934.50px;top:105.0px;color:#000;transform:scaleX(0.9850)">Обратить выделение</span>
<span class="t" style="left:956.00px;top:128.0px;color:#4f4f4f;transform:scaleX(0.9423)">Выделить</span>
<span class="t g" style="left:149.00px;top:155.0px;color:#000;transform:scale(1.0400,1.100);letter-spacing:0.03px">Этот компьютер</span>
<span class="t g" style="left:262.00px;top:155.0px;color:#000;transform:scale(1.0400,1.100);letter-spacing:0.12px">Документы</span>
<span class="t g" style="left:348.00px;top:155.0px;color:#000;transform:scale(0.8217,1.100)">SEO</span>
<span class="t" style="left:986.50px;top:155.0px;color:#6d6d6d;transform:scale(0.9745,1.100)">Поиск: SEO</span>
<span class="t" style="left:48.00px;top:201.0px;color:#000;transform:scale(1.0274,1.100)">Быстрый доступ</span>
<span class="t" style="left:56.00px;top:225.0px;color:#000;transform:scale(1.0400,1.100);letter-spacing:0.12px">Загрузки</span>
<span class="t" style="left:56.00px;top:249.0px;color:#000;transform:scale(1.0400,1.100);letter-spacing:0.06px">Рабочий стол</span>
<span class="t" style="left:56.00px;top:273.0px;color:#000;transform:scale(1.0400,1.100);letter-spacing:0.08px">Документы</span>
<span class="t" style="left:56.00px;top:297.0px;color:#000;transform:scale(1.0139,1.100)">Catch!</span>
<span class="t" style="left:56.00px;top:321.0px;color:#000;transform:scale(1.0400,1.100);letter-spacing:0.01px">Изображения</span>
<span class="t" style="left:57.00px;top:345.0px;color:#000;transform:scale(1.0000,1.100)">1</span>
<span class="t" style="left:57.00px;top:369.0px;color:#000;transform:scale(0.9132,1.100)">1518</span>
<span class="t" style="left:57.00px;top:393.0px;color:#000;transform:scale(0.9132,1.100)">1519</span>
<span class="t" style="left:56.00px;top:417.0px;color:#000;transform:scale(0.9540,1.100)">Сайт</span>
<span class="t" style="left:48.00px;top:449.0px;color:#000;transform:scale(1.0171,1.100)">OneDrive</span>
<span class="t" style="left:48.00px;top:481.0px;color:#000;transform:scale(1.0400,1.100);letter-spacing:0.04px">Этот компьютер</span>
<span class="t" style="left:56.00px;top:505.0px;color:#000;transform:scale(0.9789,1.100)">Видео</span>
<span class="t" style="left:56.00px;top:529.0px;color:#000;transform:scale(1.0400,1.100);letter-spacing:0.08px">Документы</span>
<span class="t" style="left:56.00px;top:553.0px;color:#000;transform:scale(1.0400,1.100);letter-spacing:0.12px">Загрузки</span>
<span class="t" style="left:17.00px;top:584.0px;color:#2b2b2b;transform:scale(0.9991,1.100)">Элементов: 16</span>
<span class="t" style="left:397.80px;top:186.0px;color:#4c607a;transform:scale(1.0400,1.100);letter-spacing:0.07px">Имя</span>
<span class="t" style="left:659.00px;top:186.0px;color:#4c607a;transform:scale(1.0095,1.100)">Дата изменения</span>
<span class="t" style="left:779.50px;top:186.0px;color:#4c607a;transform:scale(1.0400,1.100);letter-spacing:0.40px">Тип</span>
<span class="t" style="left:898.70px;top:186.0px;color:#4c607a;transform:scale(1.0171,1.100)">Размер</span>
<span class="t" style="left:419.40px;top:215.0px;color:#000;transform:scale(0.8868,1.100)">Seo_AG</span>
<span class="t" style="left:659.00px;top:215.0px;color:#6d6d6d;transform:scale(0.9195,1.100)">01.10.2018 8:44</span>
<span class="t" style="left:778.70px;top:215.0px;color:#6d6d6d;transform:scale(1.0298,1.100)">Папка с файлами</span>
<span class="t" style="left:419.40px;top:236.0px;color:#000;transform:scale(0.9235,1.100)">seo_ag_230</span>
<span class="t" style="left:659.00px;top:236.0px;color:#6d6d6d;transform:scale(0.9307,1.100)">01.10.2018 8:45</span>
<span class="t" style="left:778.70px;top:236.0px;color:#6d6d6d;transform:scale(1.0298,1.100)">Папка с файлами</span>
<span class="t" style="left:419.40px;top:257.0px;color:#000;transform:scale(1.0400,1.100);letter-spacing:0.10px">Аккаунты яши</span>
<span class="t" style="left:659.00px;top:257.0px;color:#6d6d6d;transform:scale(0.9307,1.100)">02.10.2018 9:12</span>
<span class="t" style="left:778.70px;top:257.0px;color:#6d6d6d;transform:scale(1.0298,1.100)">Папка с файлами</span>
<span class="t" style="left:419.40px;top:278.0px;color:#000;transform:scale(0.9983,1.100)">Директ</span>
<span class="t" style="left:659.00px;top:278.0px;color:#6d6d6d;transform:scale(0.9195,1.100)">02.10.2018 9:14</span>
<span class="t" style="left:778.70px;top:278.0px;color:#6d6d6d;transform:scale(1.0298,1.100)">Папка с файлами</span>
<span class="t" style="left:419.40px;top:299.0px;color:#000;transform:scale(1.0400,1.100);letter-spacing:0.18px">Комбинатор</span>
<span class="t" style="left:659.00px;top:299.0px;color:#6d6d6d;transform:scale(0.9307,1.100)">03.10.2018 7:31</span>
<span class="t" style="left:778.70px;top:299.0px;color:#6d6d6d;transform:scale(1.0298,1.100)">Папка с файлами</span>
<span class="t" style="left:419.40px;top:320.0px;color:#000;transform:scale(1.0151,1.100)">Марафон Начало 2017</span>
<span class="t" style="left:659.00px;top:320.0px;color:#6d6d6d;transform:scale(0.9307,1.100)">03.10.2018 7:40</span>
<span class="t" style="left:778.70px;top:320.0px;color:#6d6d6d;transform:scale(1.0298,1.100)">Папка с файлами</span>
<span class="t" style="left:419.40px;top:341.0px;color:#000;transform:scale(1.0400,1.100);letter-spacing:0.02px">Такси</span>
<span class="t" style="left:659.00px;top:341.0px;color:#6d6d6d;transform:scale(0.9307,1.100)">04.10.2018 8:02</span>
<span class="t" style="left:778.70px;top:341.0px;color:#6d6d6d;transform:scale(1.0298,1.100)">Папка с файлами</span>
<span class="t" style="left:420.00px;top:362.0px;color:#000;transform:scale(0.9318,1.100)">1.txt</span>
<span class="t" style="left:659.00px;top:362.0px;color:#6d6d6d;transform:scale(0.9307,1.100)">04.10.2018 8:10</span>
<span class="t" style="left:778.70px;top:362.0px;color:#6d6d6d;transform:scale(1.0400,1.100);letter-spacing:0.01px">Текстовый докум...</span>
<span class="t" style="left:942.50px;top:362.0px;color:#6d6d6d;transform:scale(0.9403,1.100)">5 КБ</span>
<span class="t" style="left:419.40px;top:383.0px;color:#000;transform:scale(1.0238,1.100)">display.txt</span>
<span class="t" style="left:659.00px;top:383.0px;color:#6d6d6d;transform:scale(0.9404,1.100)">04.10.2018 8:11</span>
<span class="t" style="left:778.70px;top:383.0px;color:#6d6d6d;transform:scale(1.0400,1.100);letter-spacing:0.01px">Текстовый докум...</span>
<span class="t" style="left:942.50px;top:383.0px;color:#6d6d6d;transform:scale(0.9403,1.100)">1 КБ</span>
<span class="t" style="left:419.40px;top:404.0px;color:#000;transform:scale(0.9840,1.100)">Kolyan.exe</span>
<span class="t" style="left:659.00px;top:404.0px;color:#6d6d6d;transform:scale(0.9307,1.100)">05.10.2018 9:20</span>
<span class="t" style="left:779.50px;top:404.0px;color:#6d6d6d;transform:scale(0.9768,1.100)">Приложение</span>
<span class="t" style="left:931.00px;top:404.0px;color:#6d6d6d;transform:scale(0.9257,1.100)">172 КБ</span>
<span class="t" style="left:419.40px;top:425.0px;color:#000;transform:scale(1.0377,1.100)">moab.txt</span>
<span class="t" style="left:659.00px;top:425.0px;color:#6d6d6d;transform:scale(0.9307,1.100)">05.10.2018 9:25</span>
<span class="t" style="left:778.70px;top:425.0px;color:#6d6d6d;transform:scale(1.0400,1.100);letter-spacing:0.01px">Текстовый докум...</span>
<span class="t" style="left:942.50px;top:425.0px;color:#6d6d6d;transform:scale(0.9403,1.100)">1 КБ</span>
<span class="t" style="left:419.40px;top:446.0px;color:#000;transform:scale(0.9717,1.100)">Serpstat.txt</span>
<span class="t" style="left:659.00px;top:446.0px;color:#6d6d6d;transform:scale(0.9307,1.100)">05.10.2018 9:31</span>
<span class="t" style="left:778.70px;top:446.0px;color:#6d6d6d;transform:scale(1.0400,1.100);letter-spacing:0.01px">Текстовый докум...</span>
<span class="t" style="left:942.50px;top:446.0px;color:#6d6d6d;transform:scale(0.9403,1.100)">1 КБ</span>
<span class="t" style="left:419.40px;top:467.0px;color:#000;transform:scale(0.9985,1.100)">vk.txt</span>
<span class="t" style="left:659.00px;top:467.0px;color:#6d6d6d;transform:scale(0.9307,1.100)">05.10.2018 9:40</span>
<span class="t" style="left:778.70px;top:467.0px;color:#6d6d6d;transform:scale(1.0400,1.100);letter-spacing:0.01px">Текстовый докум...</span>
<span class="t" style="left:942.50px;top:467.0px;color:#6d6d6d;transform:scale(0.9403,1.100)">1 КБ</span>
<span class="t" style="left:419.40px;top:488.0px;color:#000;transform:scale(1.0400,1.100);letter-spacing:0.01px">Анализ конкурентов.docx</span>
<span class="t" style="left:659.00px;top:488.0px;color:#6d6d6d;transform:scale(0.9307,1.100)">06.10.2018 8:05</span>
<span class="t" style="left:778.70px;top:488.0px;color:#6d6d6d;transform:scale(1.0400,1.100);letter-spacing:0.19px">Документ Micros...</span>
<span class="t" style="left:931.00px;top:488.0px;color:#6d6d6d;transform:scale(0.9257,1.100)">737 КБ</span>
<span class="t" style="left:419.40px;top:509.0px;color:#000;transform:scale(1.0268,1.100)">Аудит юзабилити.docx</span>
<span class="t" style="left:659.00px;top:509.0px;color:#6d6d6d;transform:scale(0.9307,1.100)">06.10.2018 8:17</span>
<span class="t" style="left:778.70px;top:509.0px;color:#6d6d6d;transform:scale(1.0400,1.100);letter-spacing:0.19px">Документ Micros...</span>
<span class="t" style="left:921.50px;top:509.0px;color:#6d6d6d;transform:scale(0.9393,1.100)">1 409 КБ</span>
<span class="t" style="left:419.40px;top:530.0px;color:#000;transform:scale(1.0372,1.100)">РаспределениеАккаунтовПоПроектам.xlsx</span>
<span class="t" style="left:659.00px;top:530.0px;color:#6d6d6d;transform:scale(0.9307,1.100)">06.10.2018 8:30</span>
<span class="t" style="left:778.70px;top:530.0px;color:#6d6d6d;transform:scale(1.0400,1.100);letter-spacing:0.06px">Лист Microsoft Of...</span>
<span class="t" style="left:937.00px;top:530.0px;color:#6d6d6d;transform:scale(0.9230,1.100)">12 КБ</span>
<span class="t z" style="left:614.00px;top:261.0px;color:#000;transform:scale(0.9766,1.100)">Вид</span>
<span class="t z" style="left:614.00px;top:283.0px;color:#000;transform:scale(1.0327,1.100)">Сортировка</span>
<span class="t z" style="left:614.00px;top:305.0px;color:#000;transform:scale(1.0400,1.100);letter-spacing:0.16px">Группировка</span>
<span class="t z" style="left:614.00px;top:327.0px;color:#000;transform:scale(1.0388,1.100)">Обновить</span>
<span class="t z" style="left:614.00px;top:356.0px;color:#000;transform:scale(1.0400,1.100);letter-spacing:0.06px">Настроить папку...</span>
<span class="t z" style="left:614.00px;top:385.0px;color:#6d6d6d;transform:scale(0.9907,1.100)">Вставить</span>
<span class="t z" style="left:614.00px;top:407.0px;color:#6d6d6d;transform:scale(1.0135,1.100)">Вставить ярлык</span>
<span class="t z" style="left:614.00px;top:429.0px;color:#000;transform:scale(1.0170,1.100)">Отменить удаление</span>
<span class="t z" style="left:614.00px;top:451.0px;color:#000;transform:scale(1.0200,1.100)">Открыть окно PowerShell здесь</span>
<span class="t z" style="left:614.00px;top:480.0px;color:#000;transform:scale(1.0137,1.100)">Предоставить доступ к</span>
<span class="t z" style="left:614.00px;top:509.0px;color:#000;transform:scale(0.9769,1.100)">Создать</span>
<span class="t z" style="left:614.00px;top:538.0px;color:#000;transform:scale(0.9882,1.100)">Свойства</span>
<span class="t z" style="left:799.60px;top:429.0px;color:#000;transform:scale(0.9692,1.100)">CTRL+Z</span>
</body></html>
